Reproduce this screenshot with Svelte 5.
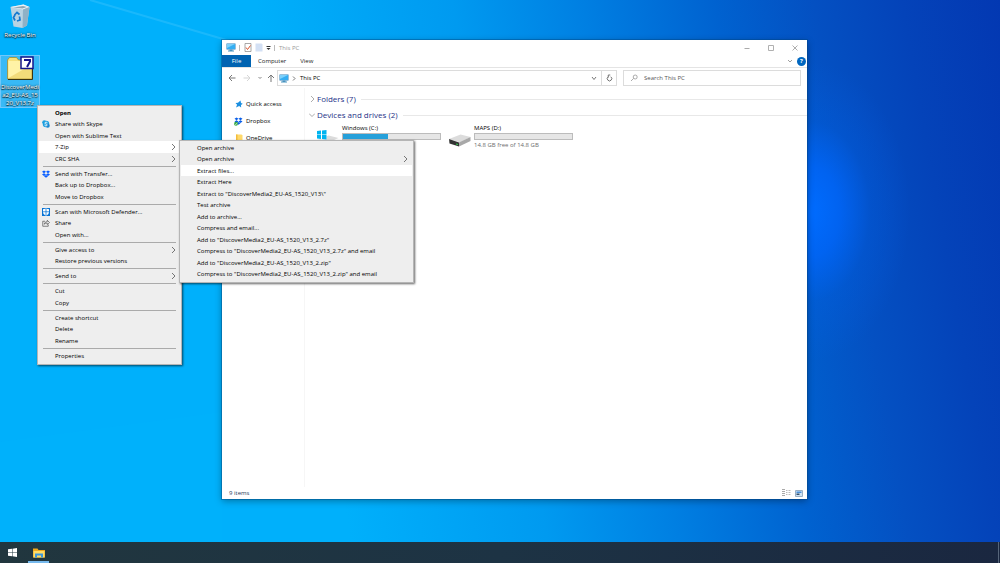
<script lang="ts">
  type MenuItem = {
    label?: string;
    icon?: string;
    bold?: boolean;
    arrow?: boolean;
    active?: boolean;
    separator?: boolean;
  };

  const contextMenu: MenuItem[] = [
    { label: 'Open', bold: true },
    { label: 'Share with Skype', icon: 'skype' },
    { label: 'Open with Sublime Text' },
    { label: '7-Zip', arrow: true, active: true },
    { label: 'CRC SHA', arrow: true },
    { separator: true },
    { label: 'Send with Transfer...', icon: 'dropbox' },
    { label: 'Back up to Dropbox...' },
    { label: 'Move to Dropbox' },
    { separator: true },
    { label: 'Scan with Microsoft Defender...', icon: 'defender' },
    { label: 'Share', icon: 'share' },
    { label: 'Open with...' },
    { separator: true },
    { label: 'Give access to', arrow: true },
    { label: 'Restore previous versions' },
    { separator: true },
    { label: 'Send to', arrow: true },
    { separator: true },
    { label: 'Cut' },
    { label: 'Copy' },
    { separator: true },
    { label: 'Create shortcut' },
    { label: 'Delete' },
    { label: 'Rename' },
    { separator: true },
    { label: 'Properties' }
  ];

  const zipMenu: MenuItem[] = [
    { label: 'Open archive' },
    { label: 'Open archive', arrow: true },
    { label: 'Extract files...', active: true },
    { label: 'Extract Here' },
    { label: 'Extract to "DiscoverMedia2_EU-AS_1520_V13\\"' },
    { label: 'Test archive' },
    { label: 'Add to archive...' },
    { label: 'Compress and email...' },
    { label: 'Add to "DiscoverMedia2_EU-AS_1520_V13_2.7z"' },
    { label: 'Compress to "DiscoverMedia2_EU-AS_1520_V13_2.7z" and email' },
    { label: 'Add to "DiscoverMedia2_EU-AS_1520_V13_2.zip"' },
    { label: 'Compress to "DiscoverMedia2_EU-AS_1520_V13_2.zip" and email' }
  ];

  const places = [
    { label: 'Quick access', icon: 'star' },
    { label: 'Dropbox', icon: 'dropbox-sync' },
    { label: 'OneDrive', icon: 'folder' }
  ];

  const drives = [
    { label: 'Windows (C:)', icon: 'system-drive', used: 46, free: '' },
    { label: 'MAPS (D:)', icon: 'drive', used: 0, free: '14.8 GB free of 14.8 GB' }
  ];

  let search = $state('');
</script>

{#snippet icon(name: string)}
  {#if name === 'skype'}
    <svg width="8" height="8" viewBox="0 0 16 16" aria-hidden="true">
      <circle cx="8" cy="8" r="6.5" fill="#1a9fe0" />
      <circle cx="4.5" cy="4.5" r="4" fill="#1a9fe0" />
      <circle cx="11.5" cy="11.5" r="4" fill="#1a86d0" />
      <path d="M11 5.6C10 4 5.6 4 5.6 6.2c0 2.4 5 1.4 5 3.8 0 2.2-4.6 2.2-5.6.2" fill="none" stroke="#fff" stroke-width="1.7" />
    </svg>
  {:else if name === 'dropbox'}
    <svg width="8" height="8" viewBox="0 0 16 16" aria-hidden="true">
      <path d="M4 1l4 2.7-4 2.7L0 3.7zM12 1l4 2.7-4 2.7-4-2.7zM4 6.4l4 2.7-4 2.7-4-2.7zM12 6.4l4 2.7-4 2.7-4-2.7zM8 10.2l4 2.5L8 15.5l-4-2.8z" fill="#0a5fff" />
    </svg>
  {:else if name === 'dropbox-sync'}
    <svg width="9" height="9" viewBox="0 0 18 18" aria-hidden="true">
      <path d="M5 1l4 2.7-4 2.7L1 3.7zM13 1l4 2.7-4 2.7-4-2.7zM5 6.4l4 2.7-4 2.7-4-2.7zM13 6.4l4 2.7-4 2.7-4-2.7zM9 10.2l4 2.5-4 2.8-4-2.8z" fill="#0a5fe8" />
      <circle cx="4" cy="13.5" r="4" fill="#35a845" />
      <path d="M2 13.5l1.5 1.7L6.2 12" fill="none" stroke="#fff" stroke-width="1.3" />
    </svg>
  {:else if name === 'defender'}
    <svg width="8" height="8" viewBox="0 0 16 16" aria-hidden="true">
      <path d="M0 0h16v16H0z" fill="#0a74d4" />
      <path d="M8 1l6 1.5V8c0 3.5-2.5 6-6 7.3C4.5 14 2 11.5 2 8V2.5z" fill="#fff" />
      <path d="M8 1v14M2 7.5h12" stroke="#0a74d4" stroke-width="1.5" />
    </svg>
  {:else if name === 'share'}
    <svg width="8" height="8" viewBox="0 0 16 16" aria-hidden="true">
      <path d="M6 4.5H1.5v10h11V11M4.5 10.5c.5-3.5 2.5-5 6-5V2.5L15 7l-4.5 4V8.3c-3 0-4.5.5-6 2.2z" fill="none" stroke="#444" stroke-width="1.3" />
    </svg>
  {:else if name === 'star'}
    <svg width="8" height="8" viewBox="0 0 16 16" aria-hidden="true">
      <path d="M11 1l1 5 3.5 1.5-3.5 2.3.3 5.2-4-2.8L2 15l2.2-5.5L1 6l5-.3z" fill="#1c8fe0" />
    </svg>
  {:else if name === 'folder'}
    <svg width="8" height="9" viewBox="0 0 16 18" aria-hidden="true">
      <path d="M2 1h11l2 2v14H2z" fill="#ffd96b" />
      <path d="M2 1h3v16H2z" fill="#f3bd3c" />
    </svg>
  {:else if name === 'pc'}
    <svg width="10" height="9" viewBox="0 0 20 18" aria-hidden="true">
      <path d="M1 1h18v12H1z" fill="#2c7fb8" />
      <path d="M2 2h16v10H2z" fill="#35aef2" />
      <path d="M2 2h16L2 10z" fill="#7dd0fa" />
      <path d="M7 13h6v2h3v2H4v-2h3z" fill="#4793c0" />
    </svg>
  {:else if name === 'drive'}
    <svg width="22" height="20" viewBox="0 0 44 40" aria-hidden="true">
      <path d="M0 24L23 15l20 5-20 11z" fill="#dcdcdc" />
      <path d="M0 24l20 7v8L1 33z" fill="#333" />
      <path d="M20 31l23-11v8L20 39z" fill="#a8a8a8" />
      <path d="M14 33l4 1v2l-4-1z" fill="#2fd04c" />
    </svg>
  {:else if name === 'system-drive'}
    <svg width="22" height="20" viewBox="0 0 44 40" aria-hidden="true">
      <path d="M0 26L23 17l20 5-20 9z" fill="#dcdcdc" />
      <path d="M0 6h19v19H0z" fill="#fff" />
      <path d="M0 8l8-1v8H0zM10 7l9-1v9h-9zM0 16h8v8l-8-1zM10 16h9v9l-9-1z" fill="#00b4f0" />
    </svg>
  {/if}
{/snippet}

{#snippet menuRows(items: MenuItem[])}
  {#each items as item}
    {#if item.separator}
      <li class="separator" role="separator"></li>
    {:else}
      <li class="entry">
        <button class="entry-button" class:bold={item.bold} class:active={item.active}>
          <span class="entry-icon">
            {#if item.icon}{@render icon(item.icon)}{/if}
          </span>
          <span class="entry-label">{item.label}</span>
          {#if item.arrow}
            <svg width="5" height="8" viewBox="0 0 5 8" aria-hidden="true">
              <path d="M1 1l3 3-3 3" fill="none" stroke="#555" stroke-width=".8" />
            </svg>
          {/if}
        </button>
      </li>
    {/if}
  {/each}
{/snippet}

<div class="screen">
  <main class="desktop">
    <svg class="beams" viewBox="0 0 1000 542" preserveAspectRatio="none" aria-hidden="true">
      <path d="M90 0l150 44" stroke="#fff" stroke-width="2" opacity=".1" />
      <path d="M0 442L222 412V542H0z" fill="#00c8ff" opacity=".06" />
    </svg>

    <div class="shortcuts">
      <button class="shortcut">
        <svg width="24" height="26" viewBox="0 0 48 52" aria-hidden="true">
          <path d="M5 8l26-5 12 5-5 37-9 5-18-3z" fill="#b9d3e2" />
          <path d="M5 8l26-5 12 5-13 5z" fill="#eef4f7" />
          <path d="M10 9l20-3 8 2-9 3z" fill="#8ba6b5" />
          <path d="M30 13l13-5-5 37-9 5z" fill="#8fb1c6" />
          <path d="M13 24l5-5 5 4M23 27l1 7-6 2M14 35l-3-6 3-5" fill="none" stroke="#1579cf" stroke-width="3.5" />
        </svg>
        <span>Recycle Bin</span>
      </button>
      <button class="shortcut selected">
        <svg width="27" height="24" viewBox="0 0 54 48" aria-hidden="true">
          <path d="M1 46V8l4-5h14l4 5h27v38z" fill="#f7e27c" stroke="#a58a2a" stroke-width="1.5" />
          <path d="M3 44V10h45v34z" fill="#fff3a6" />
          <path d="M3 44L48 18v26z" fill="#ecd268" opacity=".7" />
          <path d="M2 47h49V12" fill="none" stroke="#3b3512" stroke-width="2" />
          <path d="M28 2h24v23H28z" fill="#fff" stroke="#14148c" stroke-width="3" />
          <path d="M34 8h12v3l-6 11" fill="none" stroke="#14148c" stroke-width="4" />
        </svg>
        <span>DiscoverMedi<br />a2_EU-AS_15<br />20_V13.7z</span>
      </button>
    </div>

    <section class="window" aria-label="This PC">
      <header class="titlebar">
        {@render icon('pc')}
        <i class="divider"></i>
        <button class="tool" aria-label="Properties">
          <svg width="8" height="9" viewBox="0 0 16 18" aria-hidden="true">
            <path d="M2 1h12v16H2z" fill="#fff" stroke="#8c8c8c" stroke-width="1.5" />
            <path d="M4 9l3 4 6-8" fill="none" stroke="#d9512c" stroke-width="2" />
          </svg>
        </button>
        <button class="tool" aria-label="New folder">
          <svg width="8" height="9" viewBox="0 0 16 18" aria-hidden="true">
            <path d="M1 1h12l2 2v14H1z" fill="#d3e0f4" />
          </svg>
        </button>
        <button class="tool" aria-label="Customize toolbar">
          <svg width="5" height="6" viewBox="0 0 5 6" aria-hidden="true">
            <path d="M.5 1h4v1h-4zM.5 3h4l-2 2z" fill="#333" />
          </svg>
        </button>
        <i class="divider"></i>
        <h1>This PC</h1>
        <div class="controls">
          <button aria-label="Minimize">
            <svg width="6" height="6" viewBox="0 0 6 6" aria-hidden="true"><path d="M.5 3.5h5" stroke="#aaa" /></svg>
          </button>
          <button aria-label="Maximize">
            <svg width="6" height="6" viewBox="0 0 6 6" aria-hidden="true"><path d="M.5.5h5v5h-5z" fill="none" stroke="#b0b0b0" /></svg>
          </button>
          <button aria-label="Close">
            <svg width="6" height="6" viewBox="0 0 6 6" aria-hidden="true"><path d="M.5.5l5 5M5.5.5l-5 5" stroke="#999" stroke-width=".8" /></svg>
          </button>
        </div>
      </header>

      <nav class="ribbon" aria-label="Ribbon">
        <button class="tab file">File</button>
        <button class="tab">Computer</button>
        <button class="tab">View</button>
        <button class="tool expand" aria-label="Expand ribbon">
          <svg width="6" height="4" viewBox="0 0 6 4" aria-hidden="true"><path d="M1 1l2 2 2-2" fill="none" stroke="#888" stroke-width=".8" /></svg>
        </button>
        <button class="help" aria-label="Help">?</button>
      </nav>

      <div class="location">
        <div class="history">
          <button class="tool" aria-label="Back">
            <svg width="8" height="8" viewBox="0 0 8 8" aria-hidden="true"><path d="M7.5 4H1M4 1L1 4l3 3" fill="none" stroke="#777" /></svg>
          </button>
          <button class="tool" aria-label="Forward">
            <svg width="8" height="8" viewBox="0 0 8 8" aria-hidden="true"><path d="M.5 4H7M4 1l3 3-3 3" fill="none" stroke="#d5d5d5" /></svg>
          </button>
          <button class="tool" aria-label="Recent locations">
            <svg width="4" height="4" viewBox="0 0 4 4" aria-hidden="true"><path d="M.5 1L2 2.5 3.5 1" fill="none" stroke="#888" /></svg>
          </button>
          <button class="tool" aria-label="Up">
            <svg width="8" height="8" viewBox="0 0 8 8" aria-hidden="true"><path d="M4 8V1M1 4l3-3 3 3" fill="none" stroke="#777" /></svg>
          </button>
        </div>
        <div class="address">
          {@render icon('pc')}
          <svg width="4" height="5" viewBox="0 0 4 5" aria-hidden="true"><path d="M1 .5l2 2-2 2" fill="none" stroke="#555" stroke-width=".8" /></svg>
          <button class="crumb">This PC</button>
          <button class="tool" aria-label="Previous locations">
            <svg width="6" height="5" viewBox="0 0 6 5" aria-hidden="true"><path d="M1 1l2 2.5L5 1" fill="none" stroke="#777" /></svg>
          </button>
          <button class="refresh" aria-label="Refresh">
            <svg width="7" height="8" viewBox="0 0 14 16" aria-hidden="true"><path d="M9.5 5.5a4.500 4.500 0 1 1-5 0M4.500 7V2h4" fill="none" stroke="#666" stroke-width="1.8" /></svg>
          </button>
        </div>
        <label class="search">
          <svg width="8" height="8" viewBox="0 0 8 8" aria-hidden="true"><path d="M3.5 4.5L1 7M3.2 3a2 2 0 1 0 4 0 2 2 0 1 0-4 0" fill="none" stroke="#888" stroke-width=".7" /></svg>
          <input type="text" aria-label="Search This PC" placeholder="Search This PC" bind:value={search} />
        </label>
      </div>

      <div class="body">
        <nav class="places" aria-label="Places">
          {#each places as place}
            <a href="#{place.icon}">
              <span class="place-icon">{@render icon(place.icon)}</span>
              {place.label}
            </a>
          {/each}
        </nav>
        <div class="content">
          <h2>
            <svg width="6" height="6" viewBox="0 0 6 6" aria-hidden="true"><path d="M2 0l3 3-3 3" fill="none" stroke="#888" stroke-width=".7" /></svg>
            Folders (7)
          </h2>
          <h2>
            <svg width="6" height="6" viewBox="0 0 6 6" aria-hidden="true"><path d="M0 1.5l3 3 3-3" fill="none" stroke="#888" stroke-width=".7" /></svg>
            Devices and drives (2)
          </h2>
          <div class="drives">
            {#each drives as drive}
              <div class="drive">
                {@render icon(drive.icon)}
                <div class="drive-info">
                  <span>{drive.label}</span>
                  <div class="bar"><div class="used" style="width: {drive.used}%"></div></div>
                  <span class="free">{drive.free}</span>
                </div>
              </div>
            {/each}
          </div>
        </div>
      </div>

      <footer class="status">
        <span>9 items</span>
        <button class="tool" aria-label="Details view">
          <svg width="9" height="8" viewBox="0 0 9 8" aria-hidden="true">
            <path d="M0 .5h3M0 2.5h3M0 4.5h3M0 6.5h3" stroke="#aaa" />
            <path d="M4 1.5h1.5M4 3.5h1.5M4 5.5h1.5M6.5 1.5h2M6.5 3.5h2M6.5 5.5h2" stroke="#bbb" />
          </svg>
        </button>
        <button class="tool" aria-label="Large icons view">
          <svg width="8" height="7" viewBox="0 0 8 7" aria-hidden="true">
            <path d="M.5.5h7v6h-7z" fill="#cfe3f5" stroke="#9ab0c4" />
            <path d="M1.5 1.5h5V3h-5z" fill="#4b8fd8" />
            <path d="M1.5 3.5h3V5h-3z" fill="#35506b" />
          </svg>
        </button>
      </footer>
    </section>

    <ul class="menu context">{@render menuRows(contextMenu)}</ul>
    <ul class="menu zip">{@render menuRows(zipMenu)}</ul>
  </main>

  <footer class="taskbar">
    <button class="task" aria-label="Start">
      <svg width="9" height="9" viewBox="0 0 18 18" aria-hidden="true">
        <path d="M0 2.5l8-1v7H0zM9 1.3L18 0v8.5H9zM0 9.5h8v7l-8-1zM9 9.5h9V18l-9-1.3z" fill="#fff" />
      </svg>
    </button>
    <button class="task running" aria-label="File Explorer">
      <svg width="12" height="10" viewBox="0 0 24 20" aria-hidden="true">
        <path d="M0 1h9l2 3h13v15H0z" fill="#f0a91c" />
        <path d="M1 6h22v13H1z" fill="#ffdc68" />
        <path d="M4 11h16v8h-4v-4H8v4H4z" fill="#3d97db" />
      </svg>
    </button>
    <button class="peek" aria-label="Show desktop"></button>
  </footer>
</div>

<style>
  :global(body) {
    margin: 0;
  }

  .screen {
    display: flex;
    flex-direction: column;
    min-height: 100vh;
    font-family: "Open Sans", "Noto Sans", sans-serif;
    font-size: 6px;
    line-height: 8px;
    color: #000;
  }

  button,
  input {
    margin: 0;
    padding: 0;
    border: 0;
    background: none;
    color: inherit;
    font: inherit;
  }

  svg {
    display: block;
    flex: none;
  }

  .desktop {
    position: relative;
    flex: 1;
    overflow: hidden;
    background:
      radial-gradient(ellipse 100px 150px at 81% 39%, #006cff 0%, rgba(0, 104, 255, 0.75) 30%, rgba(0, 100, 240, 0.25) 60%, rgba(0, 100, 240, 0) 100%),
      linear-gradient(80deg, #00b0fb 0%, #00b0fb 32%, #009af0 50%, #007fe2 62%, #0062d0 74%, #0450c2 83%, #0443b9 91%, #0338b2 100%);
  }

  .beams {
    position: absolute;
    inset: 0;
    width: 100%;
    height: 100%;
  }

  .shortcuts {
    position: relative;
    display: flex;
    flex-direction: column;
    align-items: flex-start;
    gap: 16px;
    padding-top: 3px;
  }

  .shortcut {
    display: flex;
    flex-direction: column;
    align-items: center;
    gap: 2px;
    width: 40px;
    box-sizing: border-box;
    color: #fff;
    text-shadow: 0 1px 1px #000, 0 0 2px #000;
  }

  .selected {
    gap: 3px;
    border: 1px solid rgba(150, 210, 255, 0.6);
    background: rgba(140, 200, 240, 0.4);
  }

  /* Explorer window */
  .window {
    position: absolute;
    top: 40px;
    right: 19.3%;
    bottom: 43px;
    left: 22.2%;
    display: flex;
    flex-direction: column;
    box-sizing: border-box;
    background: #fff;
    box-shadow: 0 0 0 1px rgba(0, 70, 130, 0.4), 0 2px 7px rgba(0, 0, 0, 0.35);
  }

  .titlebar {
    display: flex;
    align-items: center;
    gap: 3px;
    height: 15px;
    padding-left: 4px;
  }

  .divider {
    width: 1px;
    height: 6px;
    margin-right: 1px;
    background: #bbb;
  }

  .tool {
    display: flex;
    align-items: center;
    justify-content: center;
  }

  h1 {
    margin: 0;
    color: #999;
    font-size: 6px;
    font-weight: 400;
  }

  .controls {
    display: flex;
    margin-left: auto;
  }

  .controls button {
    display: flex;
    align-items: center;
    justify-content: center;
    width: 24px;
    height: 15px;
  }

  .ribbon {
    display: flex;
    align-items: center;
    height: 12px;
    border-bottom: 1px solid #e4e4e4;
  }

  .tab {
    height: 12px;
    padding: 0 7px;
    color: #222;
  }

  .file {
    width: 29px;
    background: #0063b1;
    color: #fff;
  }

  .expand {
    margin-left: auto;
  }

  .help {
    width: 9px;
    height: 9px;
    margin: 0 1px 0 4px;
    border-radius: 50%;
    background: #0067c0;
    color: #fff;
    font-weight: 700;
  }

  .location {
    display: flex;
    align-items: center;
    gap: 6px;
    height: 20px;
    padding: 0 6px;
  }

  .history {
    display: flex;
    align-items: center;
    gap: 7px;
    width: 43px;
  }

  .history .tool:last-child {
    margin-left: -2px;
  }

  .address,
  .search {
    display: flex;
    align-items: center;
    box-sizing: border-box;
    height: 16px;
    border: 1px solid #dcdcdc;
  }

  .address {
    flex: 345;
    gap: 3px;
    padding-left: 1px;
  }

  .crumb {
    margin: 0 auto 0 1px;
  }

  .refresh {
    display: flex;
    align-items: center;
    justify-content: center;
    align-self: stretch;
    width: 15px;
    margin-left: 1px;
    border-left: 1px solid #dcdcdc;
  }

  .search {
    flex: 174;
    gap: 6px;
    padding-left: 6px;
  }

  .search input {
    flex: 1;
    min-width: 0;
    outline: none;
  }

  .search input::placeholder {
    color: #555;
    opacity: 1;
  }

  .body {
    display: flex;
    flex: 1;
  }

  .places {
    display: flex;
    flex-direction: column;
    gap: 1px;
    width: 83px;
    box-sizing: border-box;
    padding: 8px 0 0 12px;
    border-right: 1px solid #f6f6f6;
  }

  .places a {
    display: flex;
    align-items: center;
    gap: 3px;
    height: 16px;
    color: inherit;
    text-decoration: none;
  }

  .place-icon {
    display: flex;
    justify-content: center;
    width: 9px;
  }

  .content {
    flex: 1;
    padding: 3px 0 0 4px;
  }

  h2 {
    display: flex;
    align-items: center;
    gap: 2px;
    height: 16px;
    margin: 0;
    color: #1e3287;
    font-size: 8px;
    font-weight: 400;
  }

  h2::after {
    content: "";
    flex: 1;
    height: 1px;
    margin-left: 3px;
    background: #e8e8e8;
  }

  .drives {
    display: flex;
    gap: 8px;
    padding: 1px 0 0 8px;
  }

  .drive {
    display: flex;
    align-items: center;
    gap: 3px;
    width: 124px;
  }

  .drive-info {
    display: flex;
    flex: 1;
    flex-direction: column;
    height: 25px;
  }

  .bar {
    height: 5px;
    margin: 1px 0;
    border: 1px solid #bcbcbc;
    background: #e6e6e6;
  }

  .used {
    height: 100%;
    background: #26a0da;
  }

  .free {
    color: #6d6d6d;
  }

  .status {
    display: flex;
    align-items: center;
    gap: 4px;
    height: 12px;
    padding: 0 4px 0 7px;
    color: #1e395b;
  }

  .status span {
    margin-right: auto;
  }

  /* Menus */
  .menu {
    position: absolute;
    box-sizing: border-box;
    margin: 0;
    padding: 1px;
    border: 1px solid #b5b5b5;
    background: #eee;
    box-shadow: 1px 1px 2px rgba(0, 0, 0, 0.6);
    list-style: none;
  }

  .context {
    top: 105px;
    left: 37px;
    width: 145px;
    padding-bottom: 3px;
  }

  .zip {
    top: 140px;
    left: 179px;
    width: 235px;
    padding-bottom: 2px;
  }

  .entry {
    height: 11px;
  }

  .entry:nth-child(even) {
    height: 12px;
  }

  .entry-button {
    display: flex;
    align-items: center;
    width: 100%;
    height: 100%;
    padding: 0 4px 0 3px;
    text-align: left;
  }

  .entry-icon {
    width: 13px;
  }

  .entry-label {
    flex: 1;
    white-space: nowrap;
  }

  .bold {
    font-weight: 700;
  }

  .active {
    background: #fff;
  }

  .separator {
    height: 1px;
    margin: 1px 4px;
    background: #aaa;
  }

  .separator:nth-child(even) {
    margin-top: 2px;
  }

  .taskbar {
    display: flex;
    height: 21px;
    background: linear-gradient(to right, #21363e, #1d3344 50%, #1a2740);
  }

  .task {
    display: flex;
    align-items: center;
    justify-content: center;
    width: 25px;
  }

  .running {
    width: 21px;
    margin-left: 3px;
    border-bottom: 2px solid #76b9ed;
    padding-top: 2px;
  }

  .peek {
    width: 2px;
    margin-left: auto;
    border-left: 1px solid #56657a;
  }
</style>
